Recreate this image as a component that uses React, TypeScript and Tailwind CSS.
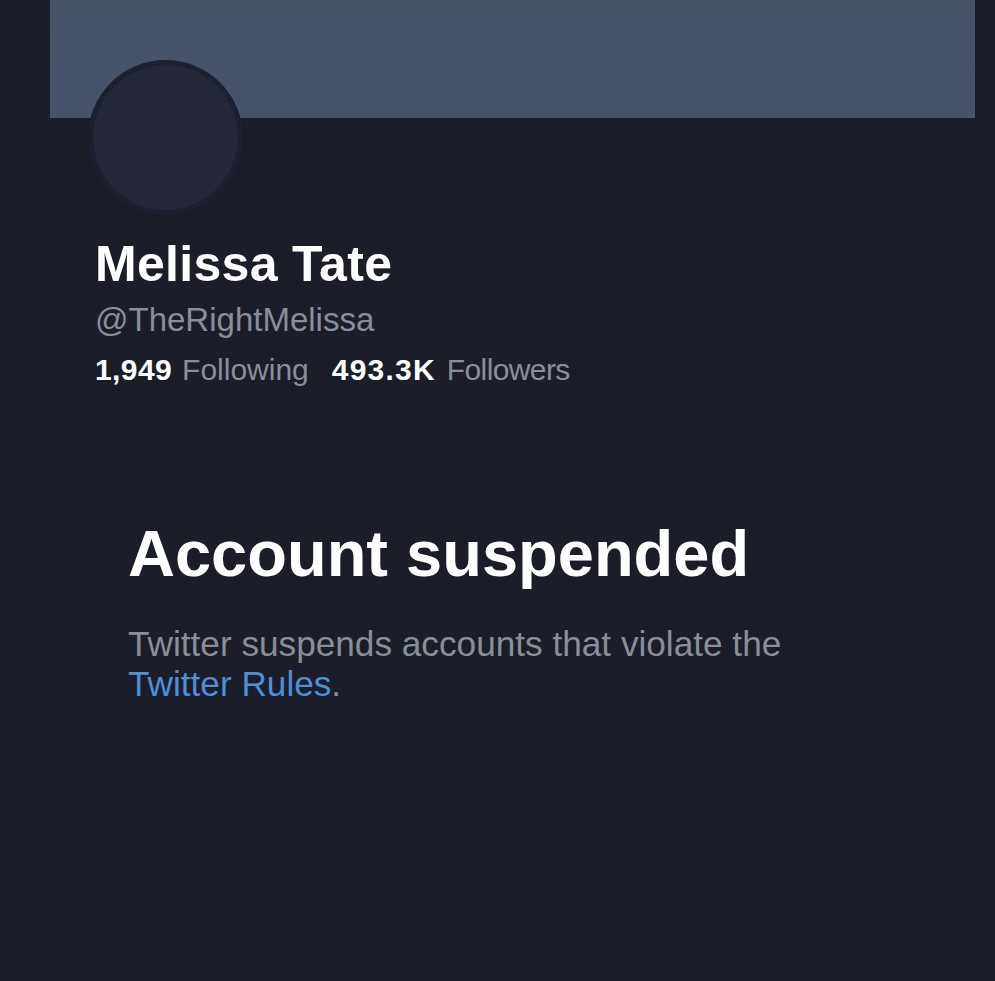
import React from "react";

const App: React.FC = () => {
  return (
    <div
      className="w-full h-[981px] bg-[#1b1e29] overflow-hidden"
      style={{ fontFamily: '"Liberation Sans", Arial, sans-serif' }}
    >
      {/* header banner */}
      <div className="ml-[50px] mr-[20px] h-[118px] bg-gradient-to-b from-[#465266] to-[#46536b]" />

      {/* avatar */}
      <div className="ml-[88px] -mt-[58px] w-[155px] h-[155px] rounded-full bg-[#1c2131] p-[5px]">
        <div className="w-full h-full rounded-full bg-[#252836]" />
      </div>

      {/* profile info */}
      <div className="ml-[95px]">
        <h1 className="mt-[25px] text-[50px] leading-[49px] font-bold text-white tracking-[0.3px]">
          Melissa Tate
        </h1>
        <div className="mt-[15px] text-[33px] leading-[32px] text-[#8a8e98]">@TheRightMelissa</div>
        <div className="mt-[19px] flex gap-[23px] text-[30px] leading-[29px]">
          <span className="flex">
            <span className="font-bold text-white tracking-[0.4px]">1,949</span>
            <span className="ml-[10px] text-[#8a8e98]">Following</span>
          </span>
          <span className="flex">
            <span className="font-bold text-white tracking-[1.2px]">493.3K</span>
            <span className="ml-[11px] text-[#8a8e98] tracking-[-0.6px]">Followers</span>
          </span>
        </div>
      </div>

      {/* suspended notice */}
      <div className="ml-[128px] mt-[138px] w-[720px]">
        <h2 className="text-[65px] leading-[64px] font-bold text-white">Account suspended</h2>
        <p className="mt-[38px] text-[35.2px] leading-[40px] text-[#8a8e98]">
          Twitter suspends accounts that violate the{" "}
          <a href="#" className="text-[#4d8fd8]">
            Twitter Rules
          </a>
          .
        </p>
      </div>
    </div>
  );
};

export default App;
